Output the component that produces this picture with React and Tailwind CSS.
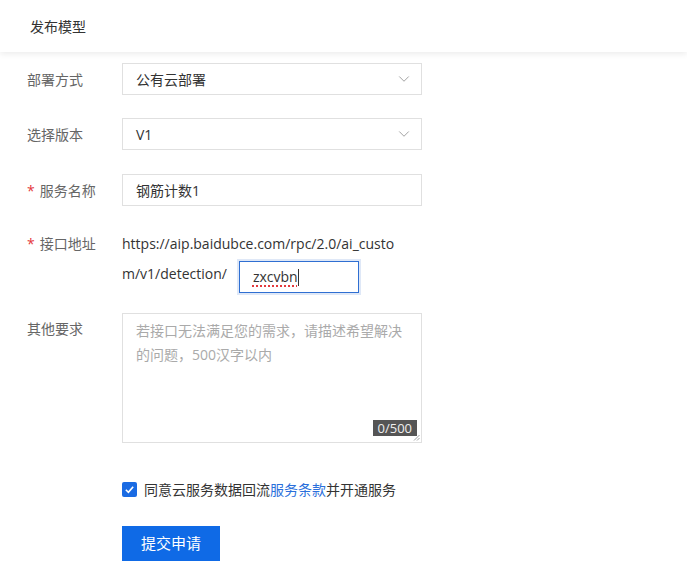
import { ChevronDown } from 'lucide-react';

const font = { fontFamily: '"Open Sans", "Noto Sans CJK SC", sans-serif' };

const Label = ({ required, children }) => (
  <div className="w-[122px] shrink-0 pl-[27px] text-[14px] text-[#666]">
    {required && <span className="mr-[5px] text-[#e4393c]">*</span>}
    {children}
  </div>
);

const SelectBox = ({ value }) => (
  <div className="flex h-[32px] w-[300px] items-center justify-between border border-[#e0e0e0] bg-white pl-[13px] pr-[8px] text-[14px] text-[#333]">
    <span>{value}</span>
    <ChevronDown size={18} strokeWidth={1.2} className="text-[#999]" />
  </div>
);

export default function App() {
  return (
    <div className="min-h-[578px] bg-white" style={font}>
      <div className="flex h-[52px] items-center pl-[30px] text-[14px] text-[#333] shadow-[0_2px_6px_rgba(0,0,0,0.08)]">
        发布模型
      </div>

      <div className="pt-[11px]">
        <div className="flex items-center">
          <Label>部署方式</Label>
          <SelectBox value="公有云部署" />
        </div>

        <div className="mt-[23px] flex items-center">
          <Label>选择版本</Label>
          <SelectBox value="V1" />
        </div>

        <div className="mt-[24px] flex items-center">
          <Label required>服务名称</Label>
          <div className="flex h-[32px] w-[300px] items-center border border-[#e0e0e0] pl-[13px] text-[14px] text-[#333]">
            钢筋计数1
          </div>
        </div>

        <div className="mt-[23px] flex items-start">
          <div className="pt-[4px]">
            <Label required>接口地址</Label>
          </div>
          <div className="w-[310px] text-[14px] leading-[30px] text-[#333]">
            <div>https://aip.baidubce.com/rpc/2.0/ai_custo</div>
            <div className="flex h-[30px] items-center">
              <span>m/v1/detection/</span>
              <div className="relative top-[3px] ml-[12px] flex h-[32px] w-[120px] shrink-0 items-center border border-[#2f6fd2] pl-[13px] leading-none shadow-[0_0_0_2px_#dfe8f7]">
                <span className="underline decoration-dotted decoration-[#e4393c] decoration-2 underline-offset-[3px]">zxcvbn</span>
                <span className="inline-block h-[17px] w-[1px] bg-[#333]" />
              </div>
            </div>
          </div>
        </div>

        <div className="mt-[24px] flex items-start">
          <div className="pt-[5px]">
            <Label>其他要求</Label>
          </div>
          <div className="relative h-[130px] w-[300px] border border-[#e0e0e0] bg-white px-[13px] pt-[5px] text-[14px] leading-[24px] text-[#aaa]">
            若接口无法满足您的需求，请描述希望解决的问题，500汉字以内
            <span className="absolute bottom-[6px] right-[4px] bg-[#555] px-[5px] text-[13px] leading-[16px] text-[#eee]">0/500</span>
            <svg className="absolute bottom-[1px] right-[1px]" width="7" height="7" viewBox="0 0 7 7">
              <path d="M1 6.5 L6.5 1 M4 6.5 L6.5 4" stroke="#888" strokeWidth="0.8" />
            </svg>
          </div>
        </div>

        <div className="ml-[122px] mt-[36px] flex items-center text-[14px] text-[#333]">
          <span className="flex h-[15px] w-[15px] items-center justify-center rounded-[2px] bg-[#1a6be3]">
            <svg width="11" height="11" viewBox="0 0 12 12">
              <path d="M2 6.3 L4.8 9 L10 3" stroke="#fff" strokeWidth="1.8" fill="none" />
            </svg>
          </span>
          <span className="ml-[7px]">
            同意云服务数据回流<span className="text-[#2a6fdb]">服务条款</span>并开通服务
          </span>
        </div>

        <button className="ml-[122px] mt-[26px] h-[35px] w-[98px] bg-[#0f6ae6] text-[15px] text-white">
          提交申请
        </button>
      </div>
    </div>
  );
}
